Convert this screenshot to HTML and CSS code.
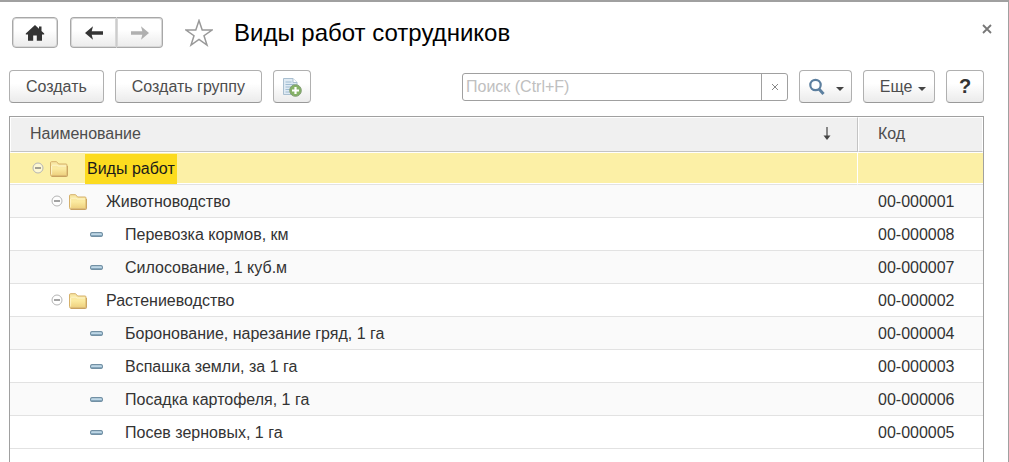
FILE: index.html
```html
<!DOCTYPE html>
<html lang="ru">
<head>
  <meta charset="UTF-8">
  <meta name="viewport" content="width=device-width, initial-scale=1.0">
  <title>Виды работ сотрудников</title>
  <link rel="stylesheet" href="styles.css">
</head>
<body>

  <!-- Shared icons -->
  <svg class="sprite" width="0" height="0" aria-hidden="true">
    <defs>
      <linearGradient id="folder-fill" x1="0" y1="0" x2="0" y2="1">
        <stop offset="0" stop-color="#f7e6a4" />
        <stop offset="0.5" stop-color="#fbeaa0" />
        <stop offset="1" stop-color="#edcf7c" />
      </linearGradient>
      <linearGradient id="dash-fill" x1="0" y1="0" x2="0" y2="1">
        <stop offset="0" stop-color="#7d9aad" />
        <stop offset="0.5" stop-color="#b4d0e2" />
        <stop offset="1" stop-color="#557990" />
      </linearGradient>
    </defs>
    <symbol id="folder" viewBox="0 0 18 16">
      <path d="M1.500 15.500h15q1 0 1-1V5" fill="none" stroke="#c39d5c" />
      <path d="M.5 13.500V1.800Q.5.7 1.600.7h5l2 2.300h7.400q1 0 1 1v9.800q0 1-1 1H1.500q-1 0-1-1z" fill="url(#folder-fill)" stroke="#d5b06b" />
      <path d="M1.600 13.500V5l1-.8h4L8.200 5H16" fill="none" stroke="#fff8d4" opacity=".8" />
    </symbol>
    <symbol id="minus" viewBox="0 0 12 12">
      <circle cx="6" cy="6" r="5" fill="#fff" fill-opacity=".5" stroke="#b5b5b5" />
      <path d="M3 6h6" stroke="#666" stroke-width="1.200" />
    </symbol>
    <symbol id="dash" viewBox="0 0 18 16">
      <rect x="2.500" y="5.500" width="12" height="4" rx="1.200" fill="url(#dash-fill)" stroke="#7290a4" />
      <path d="M4 7h9" stroke="#c8deeb" />
    </symbol>
  </svg>

  <main class="window">
    <header class="titlebar">
      <button class="btn nav-btn" type="button" aria-label="Домой">
        <svg width="20" height="18" viewBox="0 0 20 18">
          <path d="M10 1L.8 9.500v1H3V16.800h5.200V11.500h3.600v5.300H17v-6.300h2.200v-1L16.500 7V2.500H14v2.200z" fill="#333" />
        </svg>
      </button>
      <div class="nav-group">
        <button class="btn nav-btn" type="button" aria-label="Назад">
          <svg width="20" height="16" viewBox="0 0 20 16">
            <path d="M1 8l8-6.800-1.300 5H19v3.600H7.700l1.300 5z" fill="#333" />
          </svg>
        </button>
        <button class="btn nav-btn" type="button" aria-label="Вперед">
          <svg width="20" height="16" viewBox="0 0 20 16">
            <path d="M19 8l-8-6.800 1.300 5H1v3.600h11.300l-1.300 5z" fill="#b0b0b0" />
          </svg>
        </button>
      </div>
      <button class="plain star" type="button" aria-label="В избранное">
        <svg width="28" height="28" viewBox="0 0 28 28">
          <path d="M14 1.500l3.200 9.500H27l-8 5.700 3 9.300-8-5.700L6 26l3-9.300L1 11h9.800z" fill="#fff" stroke="#999" stroke-width="1.500" />
        </svg>
      </button>
      <h1 class="title">Виды работ сотрудников</h1>
      <button class="plain close" type="button" aria-label="Закрыть">
        <svg width="10" height="10" viewBox="0 0 10 10">
          <path d="M1 1l8 8M9 1L1 9" stroke="#777" stroke-width="1.800" />
        </svg>
      </button>
    </header>

    <div class="toolbar">
      <button class="btn text-btn" type="button">Создать</button>
      <button class="btn text-btn" type="button">Создать группу</button>
      <button class="btn icon-btn" type="button" aria-label="Создать копированием">
        <svg width="20" height="20" viewBox="0 0 20 20">
          <path d="M1.500 1.500h9.500l4 4v12h-13.500z" fill="#dfeaf3" stroke="#a9bfd0" />
          <path d="M11 1.500v4h4" fill="#fff" stroke="#a9bfd0" />
          <path d="M3.500 5h6M3.500 7.500h9M3.500 10h9M3.500 12.500h5M3.500 15h4" stroke="#9fbcd2" />
          <circle cx="13.500" cy="13.500" r="5.800" fill="#85b266" stroke="#7f9b72" />
          <path d="M13.500 10v7M10 13.500h7" stroke="#fff" stroke-width="2.200" />
        </svg>
      </button>
      <div class="search">
        <input class="search-input" type="text" placeholder="Поиск (Ctrl+F)" aria-label="Поиск">
        <button class="plain search-clear" type="button" aria-label="Очистить">
          <svg width="8" height="8" viewBox="0 0 8 8">
            <path d="M1 1l6 6M7 1L1 7" stroke="#888" />
          </svg>
        </button>
      </div>
      <button class="btn find-btn" type="button" aria-label="Найти">
        <svg width="18" height="18" viewBox="0 0 18 18">
          <path d="M10.500 10.500l5 5.500" stroke="#5c7f9f" stroke-width="3" />
          <circle cx="7.500" cy="7" r="5.200" fill="#fff" stroke="#5c7f9f" stroke-width="2.200" />
        </svg>
        <span class="caret"></span>
      </button>
      <button class="btn more-btn" type="button">Еще <span class="caret"></span></button>
      <button class="btn icon-btn help" type="button">?</button>
    </div>

    <div class="list">
      <table class="grid">
        <thead>
          <tr>
            <th>
              <div class="head-cell">
                Наименование
                <svg width="8" height="14" viewBox="0 0 8 14">
                  <path d="M4 0v10" stroke="#666" stroke-width="1.500" />
                  <path d="M.5 8.500h7L4 13z" fill="#444" />
                </svg>
              </div>
            </th>
            <th class="code">Код</th>
          </tr>
        </thead>
        <tbody>
          <tr class="selected">
            <td>
              <div class="node">
                <button class="plain toggle" type="button" aria-label="Свернуть"><svg width="12" height="12"><use href="#minus" /></svg></button>
                <svg width="18" height="16"><use href="#folder" /></svg>
                <span class="label">Виды работ</span>
              </div>
            </td>
            <td class="code"></td>
          </tr>
          <tr>
            <td>
              <div class="node level-1">
                <button class="plain toggle" type="button" aria-label="Свернуть"><svg width="12" height="12"><use href="#minus" /></svg></button>
                <svg width="18" height="16"><use href="#folder" /></svg>
                <span class="label">Животноводство</span>
              </div>
            </td>
            <td class="code">00-000001</td>
          </tr>
          <tr>
            <td><div class="node leaf"><svg width="18" height="16"><use href="#dash" /></svg><span class="label">Перевозка кормов, км</span></div></td>
            <td class="code">00-000008</td>
          </tr>
          <tr>
            <td><div class="node leaf"><svg width="18" height="16"><use href="#dash" /></svg><span class="label">Силосование, 1 куб.м</span></div></td>
            <td class="code">00-000007</td>
          </tr>
          <tr>
            <td>
              <div class="node level-1">
                <button class="plain toggle" type="button" aria-label="Свернуть"><svg width="12" height="12"><use href="#minus" /></svg></button>
                <svg width="18" height="16"><use href="#folder" /></svg>
                <span class="label">Растениеводство</span>
              </div>
            </td>
            <td class="code">00-000002</td>
          </tr>
          <tr>
            <td><div class="node leaf"><svg width="18" height="16"><use href="#dash" /></svg><span class="label">Боронование, нарезание гряд, 1 га</span></div></td>
            <td class="code">00-000004</td>
          </tr>
          <tr>
            <td><div class="node leaf"><svg width="18" height="16"><use href="#dash" /></svg><span class="label">Вспашка земли, за 1 га</span></div></td>
            <td class="code">00-000003</td>
          </tr>
          <tr>
            <td><div class="node leaf"><svg width="18" height="16"><use href="#dash" /></svg><span class="label">Посадка картофеля, 1 га</span></div></td>
            <td class="code">00-000006</td>
          </tr>
          <tr>
            <td><div class="node leaf"><svg width="18" height="16"><use href="#dash" /></svg><span class="label">Посев зерновых, 1 га</span></div></td>
            <td class="code">00-000005</td>
          </tr>
        </tbody>
      </table>
    </div>
  </main>

</body>
</html>
```
FILE: styles.css
```css
* {
  box-sizing: border-box;
}

body {
  margin: 0;
  background: #fff;
  color: #333;
  font-family: "Liberation Sans", Arial, sans-serif;
  font-size: 16px;
}

button,
input {
  font: inherit;
}

svg {
  display: block;
  flex-shrink: 0;
}

.sprite {
  position: absolute;
}

.window {
  display: flex;
  flex-direction: column;
  min-height: 100vh;
  padding: 15px 24px 0 9px;
  border-top: 2px solid #a0a0a0;
  border-right: 1px solid #a0a0a0;
}

/* Buttons */
.btn {
  display: flex;
  align-items: center;
  justify-content: center;
  height: 33px;
  padding: 0;
  border: 1px solid #b0b0b0;
  border-bottom-color: #999;
  border-radius: 4px;
  background: linear-gradient(#fff 40%, #ebebeb);
  color: #4d4d4d;
  white-space: nowrap;
}

.plain {
  display: flex;
  align-items: center;
  justify-content: center;
  padding: 0;
  border: 0;
  background: none;
}

.nav-btn {
  width: 46px;
  height: 31px;
  border-color: #a8a8a8;
  box-shadow: inset 0 0 0 1px #d8d8d8;
}

.text-btn {
  padding: 0 16px;
}

.icon-btn {
  width: 38px;
}

.find-btn {
  gap: 10px;
  width: 53px;
}

.more-btn {
  gap: 6px;
  width: 72px;
  padding-left: 8px;
}

.help {
  color: #333;
  font-size: 20px;
  font-weight: bold;
}

.caret {
  margin-top: 4px;
  border: 4px solid transparent;
  border-top-color: #444;
  border-bottom: 0;
}

/* Title */
.titlebar {
  display: flex;
  align-items: center;
  height: 31px;
  padding-left: 3px;
}

.nav-group {
  display: flex;
  margin-left: 12px;
}

.nav-group .nav-btn:first-child {
  width: 47px;
  border-right-color: #ccc;
  border-radius: 4px 0 0 4px;
}

.nav-group .nav-btn:last-child {
  border-left: 0;
  border-radius: 0 4px 4px 0;
}

.star {
  margin-left: 22px;
}

.title {
  margin: 0 auto 0 21px;
  color: #000;
  font-size: 24px;
  font-weight: normal;
}

.close {
  width: 10px;
  height: 10px;
  margin: 0 -8px 8px 0;
}

/* Toolbar */
.toolbar {
  display: flex;
  align-items: center;
  gap: 11px;
  margin: 22px 0 13px;
}

.search {
  display: flex;
  flex: 0 1 326px;
  height: 28px;
  margin-left: auto;
  border: 1px solid #a0a0a0;
  border-radius: 3px;
}

.search-input {
  flex: 1;
  min-width: 0;
  padding: 0 3px;
  border: 0;
  background: none;
  outline: 0;
}

.search-input::placeholder {
  color: #c0c0c0;
}

.search-clear {
  width: 26px;
  border-left: 1px solid #a0a0a0;
}

/* List */
.list {
  flex: 1;
  border: 1px solid #a0a0a0;
  border-bottom: 0;
}

.grid {
  width: 100%;
  border-spacing: 0;
  table-layout: fixed;
}

.grid th {
  height: 35px;
  padding: 0 20px 2px;
  border: 1px solid #fff;
  border-bottom-color: #c4c4c4;
  background: #f0f0f0;
  color: #4d4d4d;
  font-weight: normal;
  text-align: left;
}

.grid th:first-child {
  padding: 0 26px 2px 19px;
  border-right-color: #c4c4c4;
}

.grid .code {
  width: 125px;
  padding-left: 19px;
}

.head-cell {
  display: flex;
  align-items: center;
  justify-content: space-between;
}

.grid td {
  height: 33px;
  padding: 0;
  border-top: 1px solid transparent;
  border-bottom: 1px solid #e2e2e2;
}

.grid td.code {
  padding-left: 20px;
}

.grid tbody tr:nth-child(even) {
  background: #fafafa;
}

.grid .selected td {
  border-top-color: #fff;
  background: #fcf0a6;
  box-shadow: inset 0 -1px #fff;
}

.grid .selected td:first-child {
  border-right: 1px solid #fff;
}

.node {
  display: flex;
  align-items: center;
  height: 31px;
  padding-left: 22px;
}

.level-1 {
  padding-left: 41px;
}

.leaf {
  padding-left: 78px;
}

.toggle {
  margin: 0 6px 2px 0;
}

.label {
  margin-left: 17px;
  padding: 0 2px;
  line-height: 30px;
  white-space: nowrap;
}

.selected .label {
  background: #fcdb1f;
  color: #1a1a1a;
}
```
